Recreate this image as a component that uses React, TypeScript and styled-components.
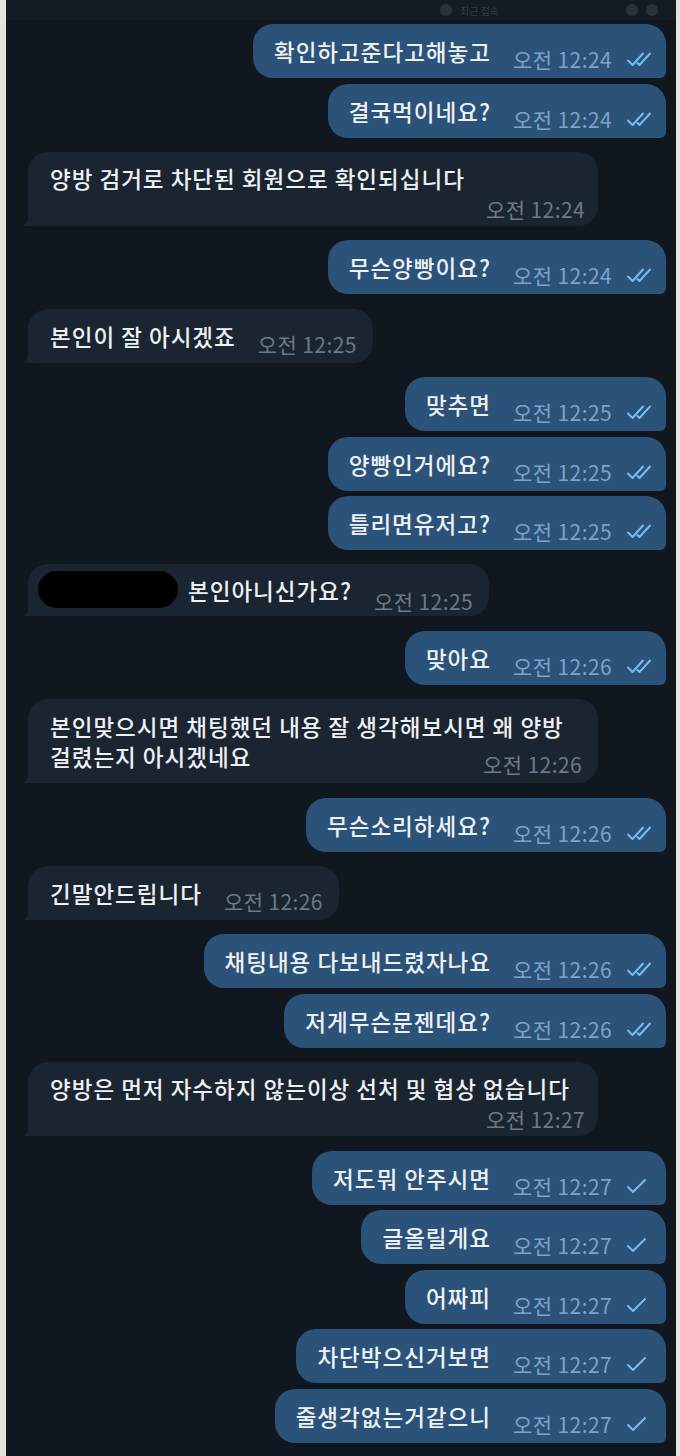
import styled, { createGlobalStyle } from "styled-components";

type Side = "in" | "out";

type Message = {
    id: number
    side: Side
    lines: string[]
    time: string
    ticks?: "double" | "single"
    redacted?: boolean
    timeBelow?: boolean
    wide?: boolean
    grouped?: boolean
}

const messages: Message[] = [
    { id: 1, side: "out", lines: ["확인하고준다고해놓고"], time: "오전 12:24", ticks: "double" },
    { id: 2, side: "out", lines: ["결국먹이네요?"], time: "오전 12:24", ticks: "double", grouped: true },
    { id: 3, side: "in", lines: ["양방 검거로 차단된 회원으로 확인되십니다"], time: "오전 12:24", timeBelow: true, wide: true },
    { id: 4, side: "out", lines: ["무슨양빵이요?"], time: "오전 12:24", ticks: "double" },
    { id: 5, side: "in", lines: ["본인이 잘 아시겠죠"], time: "오전 12:25" },
    { id: 6, side: "out", lines: ["맞추면"], time: "오전 12:25", ticks: "double" },
    { id: 7, side: "out", lines: ["양빵인거에요?"], time: "오전 12:25", ticks: "double", grouped: true },
    { id: 8, side: "out", lines: ["틀리면유저고?"], time: "오전 12:25", ticks: "double", grouped: true },
    { id: 9, side: "in", lines: ["본인아니신가요?"], time: "오전 12:25", redacted: true },
    { id: 10, side: "out", lines: ["맞아요"], time: "오전 12:26", ticks: "double" },
    { id: 11, side: "in", lines: ["본인맞으시면 채팅했던 내용 잘 생각해보시면 왜 양방", "걸렸는지 아시겠네요"], time: "오전 12:26", wide: true },
    { id: 12, side: "out", lines: ["무슨소리하세요?"], time: "오전 12:26", ticks: "double" },
    { id: 13, side: "in", lines: ["긴말안드립니다"], time: "오전 12:26" },
    { id: 14, side: "out", lines: ["채팅내용 다보내드렸자나요"], time: "오전 12:26", ticks: "double" },
    { id: 15, side: "out", lines: ["저게무슨문젠데요?"], time: "오전 12:26", ticks: "double", grouped: true },
    { id: 16, side: "in", lines: ["양방은 먼저 자수하지 않는이상 선처 및 협상 없습니다"], time: "오전 12:27", timeBelow: true, wide: true },
    { id: 17, side: "out", lines: ["저도뭐 안주시면"], time: "오전 12:27", ticks: "single" },
    { id: 18, side: "out", lines: ["글올릴게요"], time: "오전 12:27", ticks: "single", grouped: true },
    { id: 19, side: "out", lines: ["어짜피"], time: "오전 12:27", ticks: "single", grouped: true },
    { id: 20, side: "out", lines: ["차단박으신거보면"], time: "오전 12:27", ticks: "single", grouped: true },
    { id: 21, side: "out", lines: ["줄생각없는거같으니"], time: "오전 12:27", ticks: "single", grouped: true },
]

const Ticks = ({ kind }: { kind: "double" | "single" }) => (
    <TickBox>
        {kind === "double" ? (
            <svg width="30" height="16" viewBox="0 0 30 16" fill="none" stroke="currentColor" strokeWidth="2" strokeLinecap="round" strokeLinejoin="round">
                <path d="M2 9.5 L6.5 14 L17 2.5" />
                <path d="M11.5 12 L13.5 14 L24 2.5" />
            </svg>
        ) : (
            <svg width="22" height="16" viewBox="0 0 22 16" fill="none" stroke="currentColor" strokeWidth="2" strokeLinecap="round" strokeLinejoin="round">
                <path d="M2 9 L7 14 L19 2" />
            </svg>
        )}
    </TickBox>
)

const MetaInfo = ({ msg }: { msg: Message }) => (
    <Meta $side={msg.side}>
        <Time $side={msg.side}>{msg.time}</Time>
        {msg.ticks && <Ticks kind={msg.ticks} />}
    </Meta>
)

const Bubble = ({ msg }: { msg: Message }) => {
    const last = msg.lines[msg.lines.length - 1]
    const head = msg.lines.slice(0, -1)

    if (msg.timeBelow) {
        return (
            <BubbleBox $side={msg.side} $wide={msg.wide} $stacked>
                {msg.lines.map(l => <Line key={l}>{l}</Line>)}
                <MetaRow><MetaInfo msg={msg} /></MetaRow>
            </BubbleBox>
        )
    }

    return (
        <BubbleBox $side={msg.side} $wide={msg.wide} $redacted={msg.redacted}>
            {head.map(l => <Line key={l}>{l}</Line>)}
            <LastRow $redacted={msg.redacted}>
                {msg.redacted && <Redacted />}
                <Line>{last}</Line>
                <MetaInfo msg={msg} />
            </LastRow>
        </BubbleBox>
    )
}

const App = () => {
    return (
        <>
            <GlobalStyle />
            <Screen>
                <TopBar>
                    <FaintDot />
                    <FaintLabel>최근 접속</FaintLabel>
                    <Spacer />
                    <FaintDot />
                    <FaintDot />
                </TopBar>
                <ChatList>
                    {messages.map((m, i) => (
                        <Row key={m.id} $side={m.side} $gap={i === 0 ? 0 : m.grouped ? 5.5 : 14.4}>
                            <Bubble msg={m} />
                        </Row>
                    ))}
                </ChatList>
            </Screen>
        </>
    )
}
export default App

const GlobalStyle = createGlobalStyle`
    html, body{
        margin: 0;
        padding: 0;
        background: #e6e5da;
    }
    body{
        font-family: "Noto Sans CJK KR", "Noto Sans", sans-serif;
    }
`

const Screen = styled.main`
    margin: 0 4px 0 6px;
    min-height: 100vh;
    background: #10171f;
    display: flex;
    flex-direction: column;
`

const TopBar = styled.header`
    height: 20px;
    background: #151b23;
    display: flex;
    align-items: center;
    padding: 0 18px 0 434px;
    gap: 8px;
`

const FaintDot = styled.span`
    width: 12px;
    height: 12px;
    border-radius: 50%;
    background: #2a313a;
    filter: blur(0.6px);
`

const FaintLabel = styled.span`
    font-size: 10px;
    color: #343c47;
    filter: blur(0.5px);
`

const Spacer = styled.span`
    flex: 1;
`

const ChatList = styled.section`
    display: flex;
    flex-direction: column;
    padding: 4px 10px 12px 22px;
`

const Row = styled.div<{ $side: Side, $gap: number }>`
    display: flex;
    justify-content: ${p => p.$side === "out" ? "flex-end" : "flex-start"};
    margin-top: ${p => p.$gap}px;
`

const BubbleBox = styled.div<{ $side: Side, $wide?: boolean, $stacked?: boolean, $redacted?: boolean }>`
    position: relative;
    box-sizing: border-box;
    width: ${p => p.$wide ? "570px" : "auto"};
    padding: ${p =>
        p.$stacked ? "11px 13px 10px 22px"
        : p.$redacted ? "7px 16px 8px 10px"
        : p.$side === "out" ? "12px 8px 12px 21px"
        : "12px 16px 12px 22px"};
    background: ${p => p.$side === "out" ? "#2b5278" : "#1b2531"};
    color: #eef1f4;
    border-radius: ${p => p.$side === "out" ? "20px 20px 6px 20px" : "20px 20px 20px 6px"};

    ${p => p.$side === "in" && `
        &::before{
            content: "";
            position: absolute;
            left: -7px;
            bottom: 0;
            width: 12px;
            height: 12px;
            background: #1b2531;
            clip-path: path("M0 12 C5 11 8 7 9 0 L12 0 L12 12 Z");
        }
    `}
`

const Line = styled.div`
    font-size: 22.5px;
    font-weight: 500;
    letter-spacing: 1px;
    line-height: 30px;
    white-space: nowrap;
`

const LastRow = styled.div<{ $redacted?: boolean }>`
    display: flex;
    align-items: ${p => p.$redacted ? "center" : "flex-end"};
    justify-content: space-between;
`

const Redacted = styled.span`
    width: 140px;
    height: 37px;
    border-radius: 19px;
    background: #000;
    margin-right: 10px;
    flex-shrink: 0;
`

const MetaRow = styled.div`
    display: flex;
    justify-content: flex-end;
    margin-top: 5px;
`

const Meta = styled.div<{ $side: Side }>`
    display: flex;
    align-items: center;
    align-self: flex-end;
    margin-left: 22px;
    margin-bottom: -4px;
    height: 22px;
    flex-shrink: 0;
`

const Time = styled.span<{ $side: Side }>`
    font-size: 21px;
    letter-spacing: 0.4px;
    line-height: 22px;
    color: ${p => p.$side === "out" ? "#7fa3c7" : "#6b7a88"};
    white-space: nowrap;
`

const TickBox = styled.span`
    width: 32px;
    margin-left: 14px;
    display: flex;
    align-items: center;
    color: #78bbef;
`
